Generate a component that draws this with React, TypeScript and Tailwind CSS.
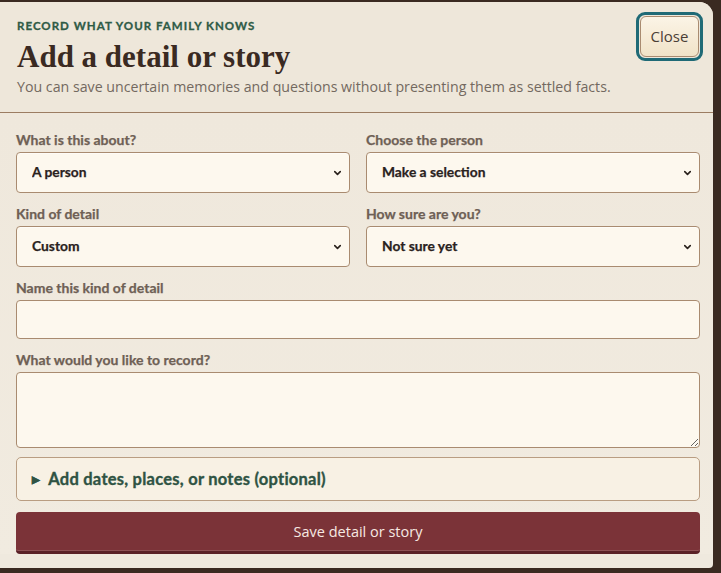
import { ChevronDown } from 'lucide-react'

const sans = { fontFamily: 'Lato, "Noto Sans", sans-serif' }

function Label({ children }: { children: React.ReactNode }) {
  return (
    <label className="mb-[4px] block text-[14px] leading-4 font-bold text-[#6e6055] [-webkit-text-stroke:0.25px_#6e6055]">
      {children}
    </label>
  )
}

function Select({ value }: { value: string }) {
  return (
    <div className="relative">
      <select
        defaultValue={value}
        className="h-[41px] w-full appearance-none rounded-[4px] border border-[#a98b70] bg-[#fdf8ee] pl-[15px] text-[13.8px] font-bold text-[#2a221d] shadow-[inset_0_1px_0_rgba(255,255,255,0.6)] outline-none [-webkit-text-stroke:0.25px_#2a221d]"
      >
        <option>{value}</option>
      </select>
      <ChevronDown
        className="pointer-events-none absolute top-1/2 right-[7px] h-[11px] w-[11px] -translate-y-1/2 text-[#2a221d]"
        strokeWidth={3.5}
      />
    </div>
  )
}

export default function App() {
  return (
    <div className="h-[573px] w-[721px] overflow-hidden bg-[#3a2a21] pt-[2px]" style={sans}>
      <div className="flex h-[566px] w-[713px] flex-col overflow-hidden rounded-tr-[14px] rounded-br-[4px] bg-[#efe9de]">
        <header className="flex items-start justify-between border-b border-[#9c7d62] bg-[#eee7da] pr-[10px] pl-[17px]">
          <div className="pt-[16px] pb-[15px]">
            <p className="text-[11.5px] leading-4 font-bold tracking-[0.09em] text-[#2f5b46] [-webkit-text-stroke:0.3px_#2f5b46]">
              RECORD WHAT YOUR FAMILY KNOWS
            </p>
            <h1
              className="mt-[4px] text-[31px] leading-[38px] font-bold text-[#3a2a22]"
              style={{ fontFamily: '"Liberation Serif", serif' }}
            >
              Add a detail or story
            </h1>
            <p
              className="mt-[1px] text-[14.2px] leading-5 text-[#736960]"
              style={{ fontFamily: '"Open Sans", sans-serif' }}
            >
              You can save uncertain memories and questions without presenting them as settled facts.
            </p>
          </div>
          <div className="mt-[10px] rounded-[9px] border-[3px] border-[#1f6a76] p-[1px]">
            <button
              className="h-[41px] w-[59px] rounded-[6px] border border-[#a98b70] bg-gradient-to-b from-[#fbf4e6] to-[#f1e3c8] text-[15px] text-[#4a3e36]"
              style={{ fontFamily: '"Open Sans", sans-serif' }}
            >
              Close
            </button>
          </div>
        </header>

        <div className="flex flex-col bg-gradient-to-b from-[#efe8dc] to-[#f1ebe0] pr-[13px] pl-[16px]">
          <div className="mt-[19px] grid grid-cols-2 gap-x-[16px] gap-y-[13px]">
            <div>
              <Label>What is this about?</Label>
              <Select value="A person" />
            </div>
            <div>
              <Label>Choose the person</Label>
              <Select value="Make a selection" />
            </div>
            <div>
              <Label>Kind of detail</Label>
              <Select value="Custom" />
            </div>
            <div>
              <Label>How sure are you?</Label>
              <Select value="Not sure yet" />
            </div>
          </div>

          <div className="mt-[13px]">
            <Label>Name this kind of detail</Label>
            <input className="block h-[39px] w-full rounded-[4px] border border-[#a98b70] bg-[#fdf8ee] outline-none" />
          </div>

          <div className="mt-[13px]">
            <Label>What would you like to record?</Label>
            <textarea className="block h-[76px] w-full rounded-[4px] border border-[#a98b70] bg-[#fdf8ee] outline-none" />
          </div>

          <details className="mt-[9px] rounded-[5px] border border-[#b99d82] bg-[#f8f1e4]">
            <summary className="flex h-[42px] cursor-pointer list-none items-center pl-[15px] text-[16.5px] font-bold tracking-[0.015em] text-[#2f5343] [-webkit-text-stroke:0.35px_#2f5343]">
              <span className="mr-[8px] text-[10px]">▶</span>
              Add dates, places, or notes (optional)
            </summary>
          </details>

          <button
            className="mt-[11px] h-[42px] w-full rounded-[4px] border-b-[3px] border-[#5a2127] bg-[#7b3338] text-[14.5px] text-[#f7e9e2] shadow-[inset_0_-1px_0_rgba(255,255,255,0.15)]"
            style={{ fontFamily: '"Open Sans", sans-serif' }}
          >
            Save detail or story
          </button>
        </div>
      </div>
    </div>
  )
}
